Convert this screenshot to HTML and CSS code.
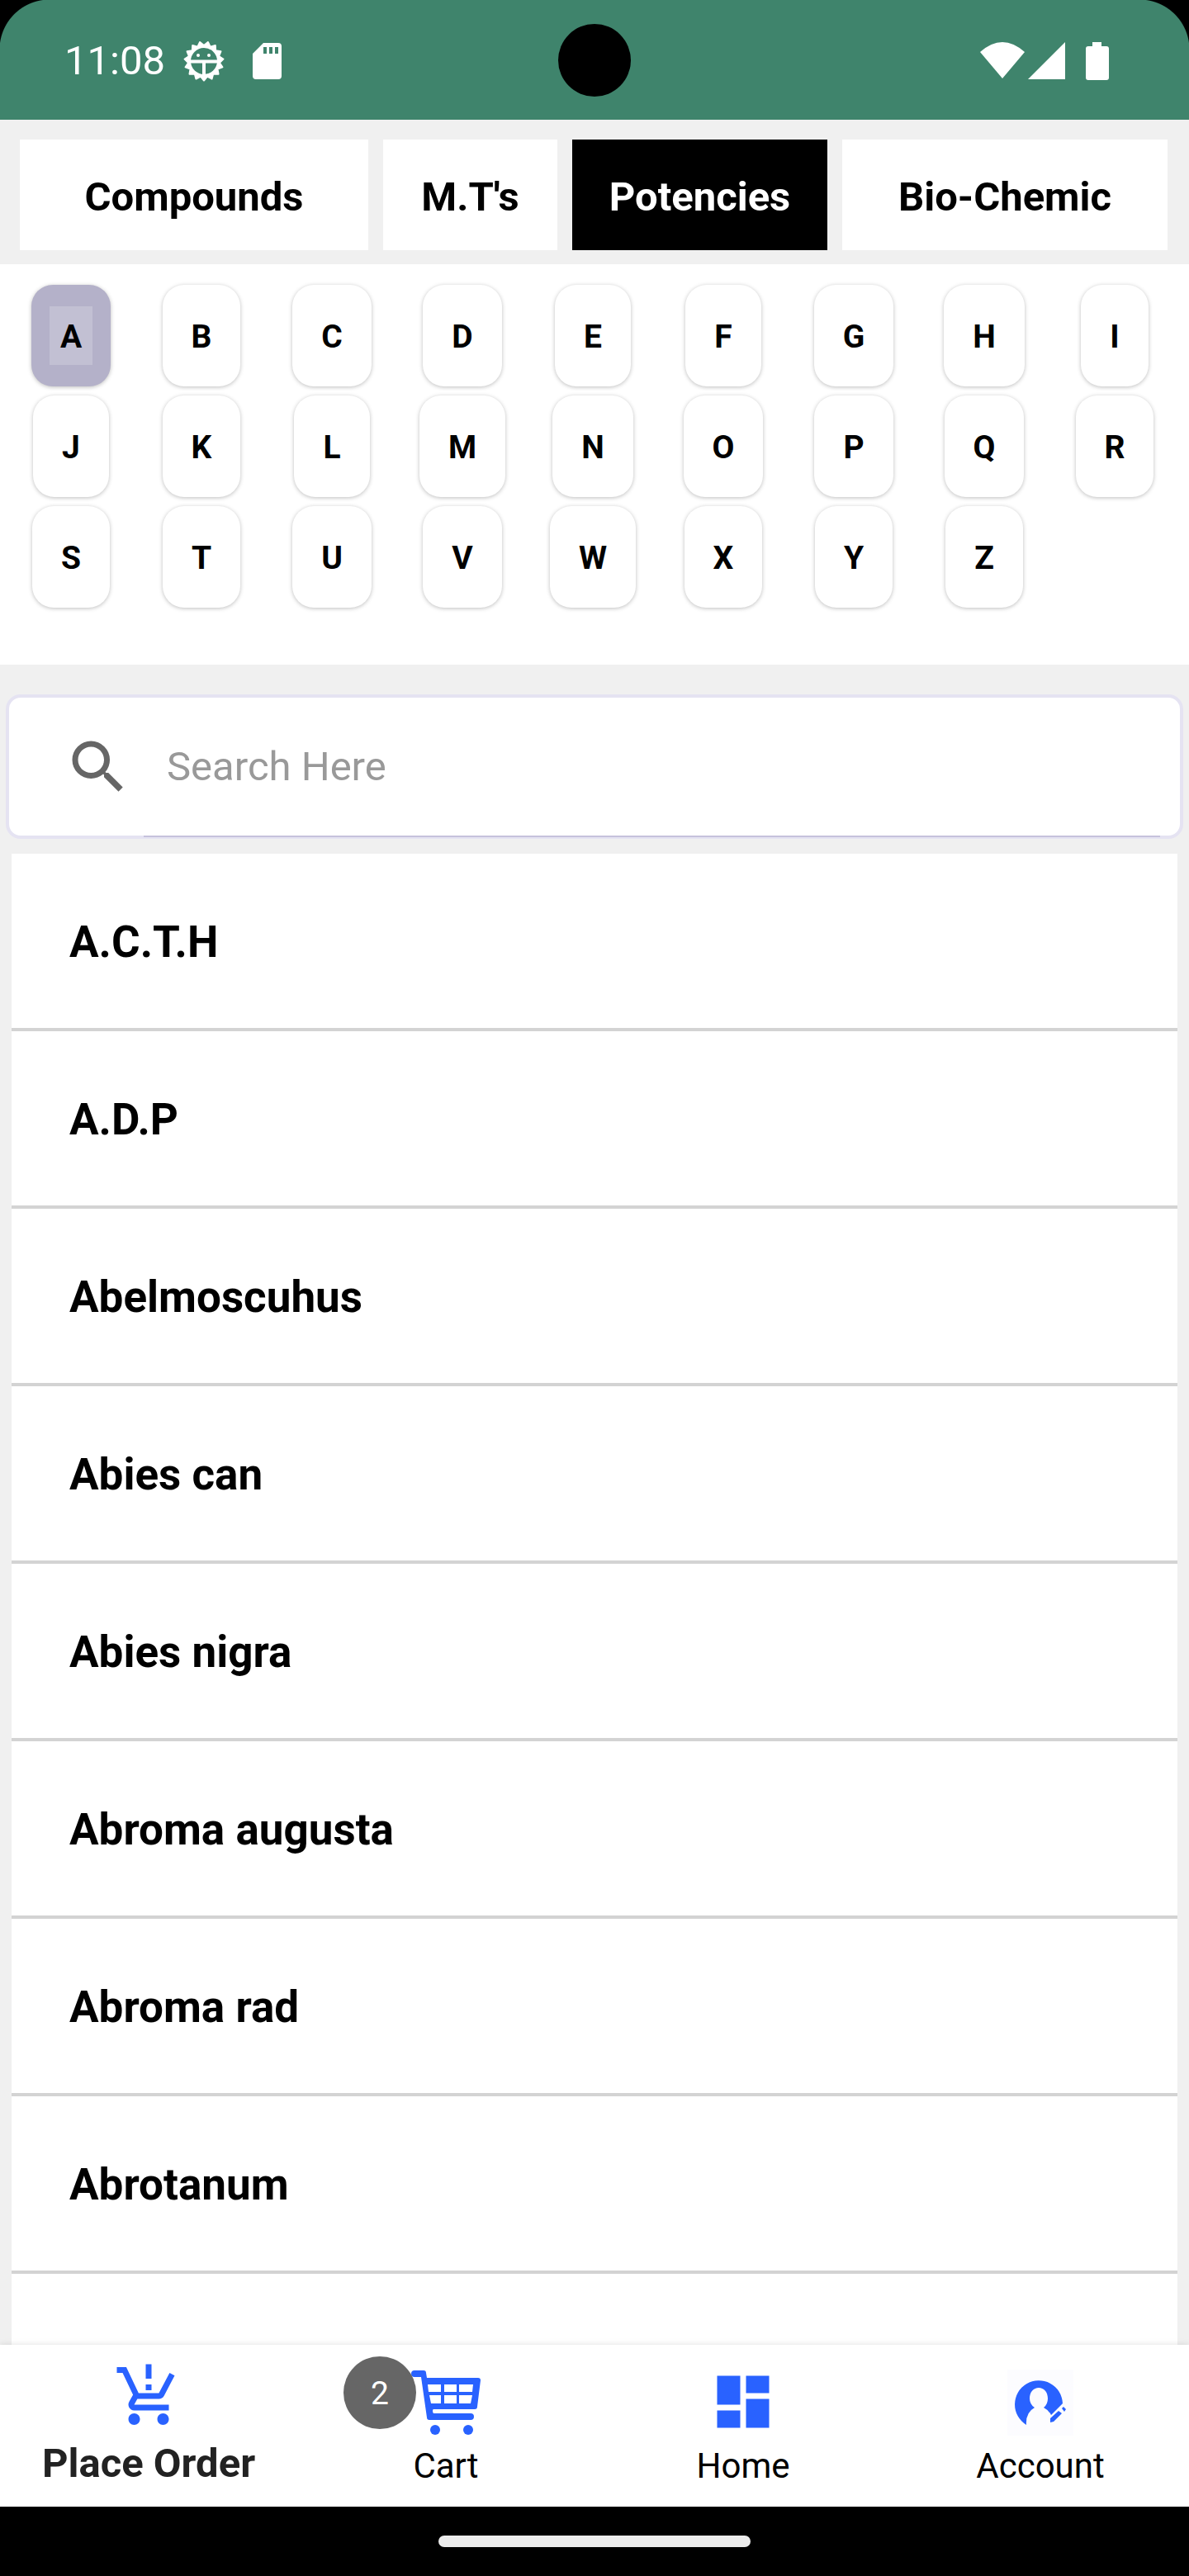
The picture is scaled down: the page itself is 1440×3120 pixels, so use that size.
FILE: index.html
```html
<!DOCTYPE html>
<html lang="en">
<head>
    <meta charset="UTF-8">
    <meta name="viewport" content="width=device-width, initial-scale=1.0">
    <title>Potencies</title>
    <link rel="stylesheet" href="styles.css">
</head>
<body>
    <!-- Status bar -->
    <header class="status-bar">
        <span class="time">11:08</span>
        <svg class="gear" viewBox="0 0 50 50">
            <polygon fill="#fff" stroke="#fff" stroke-width="2" stroke-linejoin="round" points="25,48.5 29,43.6 34.6,46.5 36.2,40.4 42.5,40.7 41.5,34.5 47.4,32.3 43.9,27 48.4,22.5 43.1,19.1 45.4,13.3 39.1,12.3 38.8,6 32.7,7.6 29.9,2 25,6 20.1,2 17.3,7.6 11.2,6 10.9,12.3 4.6,13.3 6.9,19.1 1.6,22.5 6.1,27 2.6,32.3 8.5,34.5 7.5,40.7 13.8,40.4 15.4,46.5 21,43.6"/>
            <circle cx="25" cy="25" r="16" fill="#3f846c"/>
            <path fill="#fff" d="M8 23.500h34v4H27v14h-4v-14H8z"/>
            <circle cx="18" cy="18" r="2" fill="#fff"/>
            <circle cx="31" cy="18" r="2" fill="#fff"/>
        </svg>
        <svg class="sd-card" viewBox="0 0 35 44">
            <path fill="#fff" fill-rule="evenodd" d="M13 0h18a4 4 0 0 1 4 4v36a4 4 0 0 1-4 4H4a4 4 0 0 1-4-4V13zM13 5v8h4V5zM20 5v8h4V5zM27 5v8h4V5z"/>
        </svg>
        <svg class="signals" viewBox="0 0 156 46">
            <path fill="#fff" d="M0 12Q27-12 54 12L27 44z"/>
            <path fill="#fff" d="M58 45L103 0v45z"/>
            <path fill="#fff" d="M136 0h11v5h6a3 3 0 0 1 3 3v35a3 3 0 0 1-3 3h-22a3 3 0 0 1-3-3V8a3 3 0 0 1 3-3h5z"/>
        </svg>
        <span class="camera"></span>
    </header>

    <!-- Category tabs -->
    <div class="tabs">
        <button class="tab">Compounds</button>
        <button class="tab">M.T's</button>
        <button class="tab active">Potencies</button>
        <button class="tab">Bio-Chemic</button>
    </div>

    <!-- Alphabet filter -->
    <div class="letters">
        <button class="letter selected"><span>A</span></button>
        <button class="letter"><span>B</span></button>
        <button class="letter"><span>C</span></button>
        <button class="letter"><span>D</span></button>
        <button class="letter"><span>E</span></button>
        <button class="letter"><span>F</span></button>
        <button class="letter"><span>G</span></button>
        <button class="letter"><span>H</span></button>
        <button class="letter"><span>I</span></button>
        <button class="letter"><span>J</span></button>
        <button class="letter"><span>K</span></button>
        <button class="letter"><span>L</span></button>
        <button class="letter"><span>M</span></button>
        <button class="letter"><span>N</span></button>
        <button class="letter"><span>O</span></button>
        <button class="letter"><span>P</span></button>
        <button class="letter"><span>Q</span></button>
        <button class="letter"><span>R</span></button>
        <button class="letter"><span>S</span></button>
        <button class="letter"><span>T</span></button>
        <button class="letter"><span>U</span></button>
        <button class="letter"><span>V</span></button>
        <button class="letter"><span>W</span></button>
        <button class="letter"><span>X</span></button>
        <button class="letter"><span>Y</span></button>
        <button class="letter"><span>Z</span></button>
    </div>

    <!-- Search -->
    <div class="search">
        <label for="search" aria-label="Search">
            <svg class="icon" viewBox="0 0 24 24"><path fill="#666" d="M15.500 14h-.79l-.28-.27A6.471 6.471 0 0 0 16 9.500 6.500 6.500 0 1 0 9.500 16c1.610 0 3.090-.59 4.230-1.570l.27.28v.79l5 4.990L20.490 19l-4.990-5zm-6 0C7.010 14 5 11.990 5 9.500S7.010 5 9.500 5 14 7.010 14 9.500 11.990 14 9.500 14z"/></svg>
        </label>
        <input type="text" id="search" placeholder="Search Here">
    </div>

    <ul class="medicines">
        <li>A.C.T.H</li>
        <li>A.D.P</li>
        <li>Abelmoscuhus</li>
        <li>Abies can</li>
        <li>Abies nigra</li>
        <li>Abroma augusta</li>
        <li>Abroma rad</li>
        <li>Abrotanum</li>
    </ul>

    <!-- Bottom navigation -->
    <nav class="bottom-nav">
        <a href="#order" class="nav-item current">
            <svg class="icon" viewBox="0 0 24 24"><path fill="#2962ff" d="M13 10h-2V8h2v2zm0-4h-2V1h2v5zM7 18c-1.100 0-1.990.9-1.990 2S5.900 22 7 22s2-.9 2-2-.9-2-2-2zm10 0c-1.100 0-1.990.9-1.990 2s.89 2 1.990 2 2-.9 2-2-.9-2-2-2zM8.100 13h7.450c.75 0 1.410-.41 1.750-1.030L21 4.960 19.250 4l-3.700 7H8.530L4.270 2H1v2h2l3.600 7.590-1.350 2.440C4.520 15.370 5.480 17 7 17h12v-2H7l1.100-2z"/></svg>
            <span>Place Order</span>
        </a>
        <a href="#cart" class="nav-item">
            <svg class="icon" viewBox="0 0 84 84">
                <path fill="#2962ff" fill-rule="evenodd" d="M4 4h11q3 0 3 3l1 6h62q3 0 3 3l-4 32q0 3-3 3H27q-1 0-1 2t1 3h45a4 4 0 0 1 0 8H22q-3 0-3-3L12 12H4a4 4 0 0 1 0-8zM20 21l1 9h15v-9zM40 21v9h15v-9zM58 21v9h16l1-9zM22 34l2 10h12V34zM40 34v10h15V34zM58 34v10h14l2-10z"/>
                <circle cx="29" cy="76" r="6" fill="#2962ff"/>
                <circle cx="69" cy="76" r="6" fill="#2962ff"/>
            </svg>
            <span>Cart</span>
            <b class="badge">2</b>
        </a>
        <a href="#home" class="nav-item">
            <svg class="icon" viewBox="0 0 24 24"><path fill="#2962ff" d="M3 13h8V3H3v10zm0 8h8v-6H3v6zm10 0h8V11h-8v10zm0-18v6h8V3h-8z"/></svg>
            <span>Home</span>
        </a>
        <a href="#account" class="nav-item">
            <svg class="icon" viewBox="0 0 84 84">
                <rect x="2" y="3" width="80" height="80" fill="#fcfcff"/>
                <path fill="#2962ff" d="M25 70A29 29 0 1 1 69 44L55 58Q52 52 46 49Q51 45 51 38C51 30 46 25 40 25S29 30 29 38Q29 45 35 49Q24 55 25 70z"/>
                <path fill="#2962ff" d="M54 67L54 62L64 53L68 56L58 66zM68 50l2-2 3 3-2 3z"/>
            </svg>
            <span>Account</span>
        </a>
    </nav>

    <footer class="gesture-bar"><span></span></footer>
</body>
</html>
```
FILE: styles.css
```css
* {
    box-sizing: border-box;
}

body {
    margin: 0;
    height: 100vh;
    display: flex;
    flex-direction: column;
    overflow: hidden;
    background-color: #f0f0f0;
    font-family: Roboto, "Liberation Sans", sans-serif;
    font-size: 49px;
    line-height: 56px;
    color: #000;
}

button, input {
    font-family: inherit;
    border: none;
    margin: 0;
}

.icon {
    display: block;
    width: 84px;
    height: 84px;
}

/* Status bar */
.status-bar {
    position: relative;
    flex: none;
    display: flex;
    align-items: center;
    height: 145px;
    padding: 2px 97px 0 78px;
    color: #fff;
    background:
        radial-gradient(circle at 60px 60px, #3f846c 60px, #000 61px) left top / 60px 60px no-repeat,
        radial-gradient(circle at 0 60px, #3f846c 60px, #000 61px) right top / 60px 60px no-repeat,
        #3f846c;
}

.gear {
    width: 50px;
    height: 50px;
    margin-left: 22px;
}

.sd-card {
    width: 35px;
    height: 44px;
    margin-left: 34px;
}

.signals {
    width: 156px;
    height: 46px;
    margin-left: auto;
}

.camera {
    position: absolute;
    top: 29px;
    left: calc(50% - 44px);
    width: 88px;
    height: 88px;
    border-radius: 50%;
    background-color: #000;
}

/* Tabs */
.tabs {
    flex: none;
    display: grid;
    grid-template-columns: 422fr 211fr 309fr 394fr;
    gap: 18px;
    padding: 24px 26px 17px 24px;
}

.tab {
    height: 134px;
    padding: 4px 0 0;
    font-size: 49px;
    font-weight: 700;
    background-color: #fff;
    color: #000;
}

.tab.active {
    background-color: #000;
    color: #fff;
}

/* Alphabet */
.letters {
    flex: none;
    display: grid;
    grid-template-columns: repeat(9, 1fr);
    justify-items: center;
    row-gap: 11px;
    padding: 25px 11px 69px 7px;
    background-color: #fff;
}

.letter {
    padding: 26px 22px;
    border-radius: 26px;
    background-color: #fff;
    box-shadow: 0 1px 5px rgba(0, 0, 0, 0.26);
    font-size: 39px;
    font-weight: 700;
    line-height: 67px;
    color: #000;
}

.letter span {
    display: block;
    padding: 4px 13px 0;
}

.letter.selected {
    background-color: #b4b1c9;
}

.letter.selected span {
    background-color: #c2c0d3;
}

/* Search */
.search {
    position: relative;
    flex: none;
    display: flex;
    align-items: center;
    height: 175px;
    margin: 36px 7px 18px;
    padding: 0 24px 0 66px;
    border: 4px solid #e5e3f2;
    border-radius: 18px;
    background-color: #fff;
}

.search::after {
    content: "";
    position: absolute;
    left: 163px;
    right: 24px;
    bottom: -2px;
    height: 2px;
    background-color: #c6c2dc;
}

.search input {
    flex: 1;
    min-width: 0;
    padding: 0;
    margin-left: 41px;
    font-size: 49px;
    color: #000;
    background: none;
    outline: none;
}

.search input::placeholder {
    color: #999;
}

/* Medicines list */
.medicines {
    flex: 1;
    min-height: 0;
    overflow: hidden;
    margin: 0 14px;
    padding: 0;
    list-style: none;
    background-color: #fff;
}

.medicines li {
    height: 215px;
    padding: 2px 70px 0;
    border-bottom: 4px solid #d3d3d3;
    font-size: 53px;
    font-weight: 700;
    line-height: 211px;
}

/* Bottom navigation */
.bottom-nav {
    position: relative;
    flex: none;
    display: grid;
    grid-template-columns: repeat(4, 1fr);
    height: 196px;
    background-color: #fff;
    box-shadow: 0 0 8px rgba(0, 0, 0, 0.12);
}

.nav-item {
    position: relative;
    display: flex;
    flex-direction: column;
    align-items: center;
    gap: 8px;
    padding-top: 27px;
    font-size: 42px;
    color: #000;
    text-decoration: none;
}

.nav-item.current {
    gap: 12px;
    padding-top: 20px;
    font-size: 49px;
    font-weight: 700;
    color: #222;
}

.badge {
    position: absolute;
    top: 14px;
    left: calc(50% - 124px);
    width: 88px;
    height: 88px;
    border-radius: 50%;
    background-color: #666;
    color: #fff;
    font-size: 39px;
    font-weight: 400;
    line-height: 90px;
    text-align: center;
}

/* Gesture bar */
.gesture-bar {
    flex: none;
    display: flex;
    justify-content: center;
    align-items: center;
    height: 84px;
    background-color: #000;
}

.gesture-bar span {
    width: 378px;
    height: 14px;
    border-radius: 7px;
    background-color: #ececec;
}
```
